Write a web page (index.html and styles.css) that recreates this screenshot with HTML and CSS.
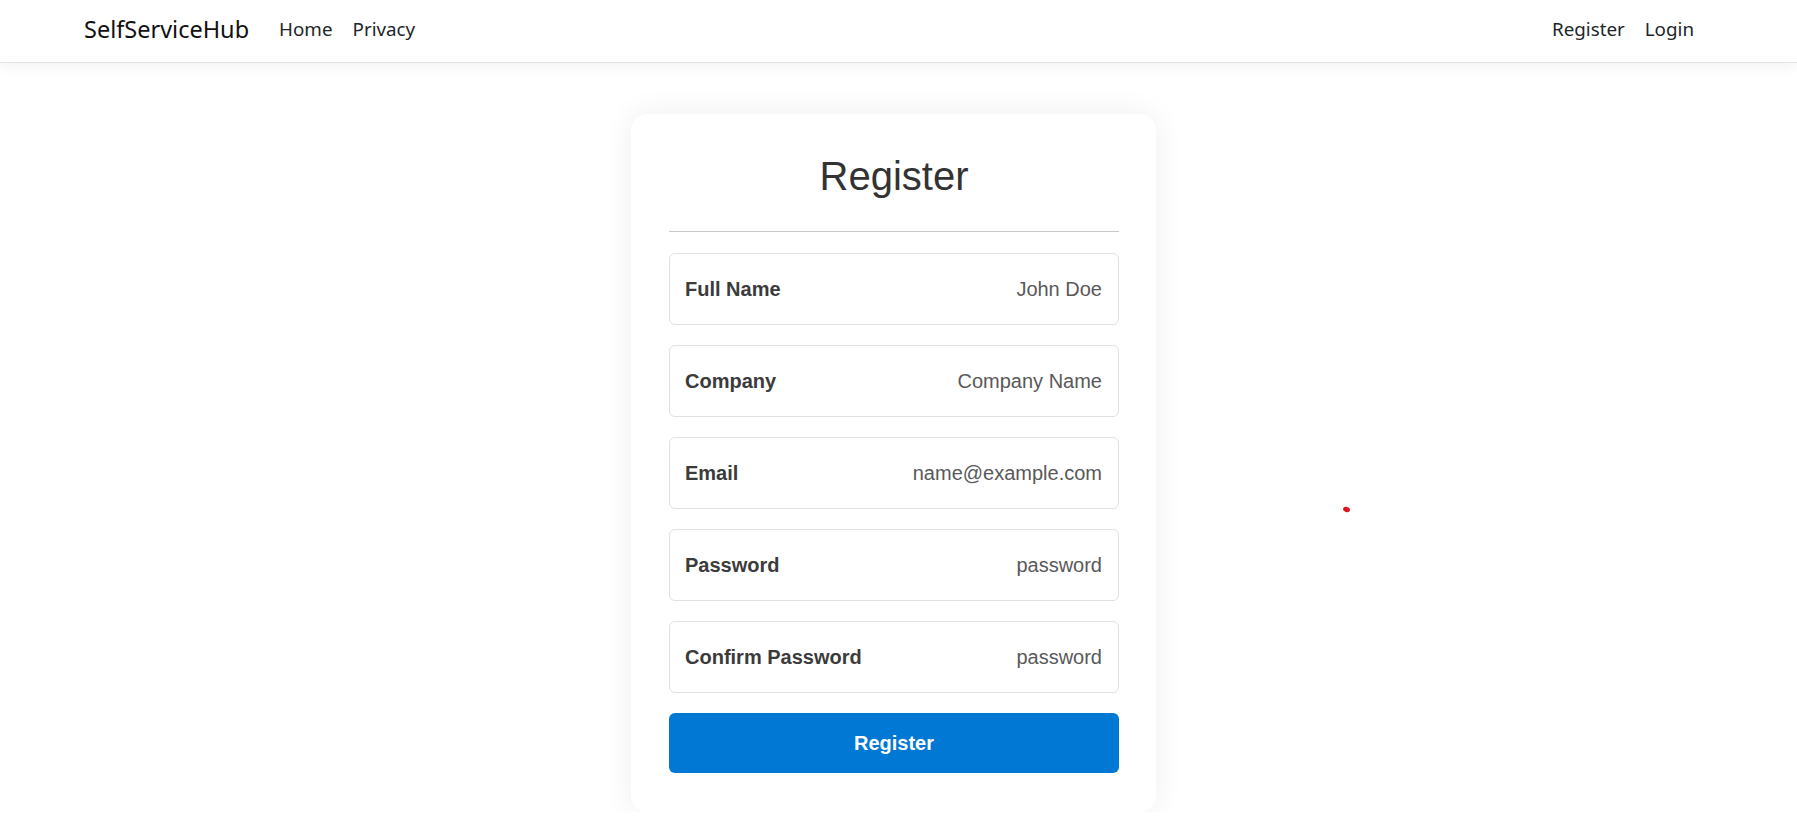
FILE: index.html
```html
<!DOCTYPE html>
<html lang="en">
<head>
  <meta charset="UTF-8">
  <title>Register - SelfServiceHub</title>
  <link rel="stylesheet" href="styles.css">
</head>
<body>

  <header class="navbar">
    <a class="brand" href="#">SelfServiceHub</a>
    <nav class="nav-links">
      <a href="#">Home</a>
      <a href="#">Privacy</a>
    </nav>
    <nav class="nav-links nav-right">
      <a href="#">Register</a>
      <a href="#">Login</a>
    </nav>
  </header>

  <main class="pagina">
    <form class="tarjeta">
      <h1>Register</h1>
      <hr>

      <div class="campo">
        <label for="nombre">Full Name</label>
        <input type="text" id="nombre" placeholder="John Doe">
      </div>
      <div class="campo">
        <label for="empresa">Company</label>
        <input type="text" id="empresa" placeholder="Company Name">
      </div>
      <div class="campo">
        <label for="correo">Email</label>
        <input type="email" id="correo" placeholder="name@example.com">
      </div>
      <div class="campo">
        <label for="clave">Password</label>
        <input type="password" id="clave" placeholder="password">
      </div>
      <div class="campo">
        <label for="clave2">Confirm Password</label>
        <input type="password" id="clave2" placeholder="password">
      </div>

      <button type="button">Register</button>
    </form>
  </main>

  <span class="punto"></span>

</body>
</html>
```

FILE: styles.css
```css
body {
  margin: 0;
  background-color: #fff;
  font-family: "Liberation Sans", Arial, sans-serif;
  color: #333;
}

.navbar {
  display: flex;
  align-items: center;
  height: 62px;
  padding: 0 93px 0 84px;
  border-bottom: 1px solid #e3e3e3;
  box-shadow: 0 4px 12px rgba(0, 0, 0, 0.05);
  font-family: "Noto Sans", "Open Sans", sans-serif;
}

.brand {
  color: #111;
  font-size: 23.5px;
  text-decoration: none;
  margin-right: 20px;
  padding-bottom: 4px;
}

.nav-links {
  display: flex;
  padding-bottom: 4px;
}

.nav-links a {
  color: #212529;
  font-size: 18.8px;
  text-decoration: none;
  padding: 0 10px;
}

.nav-right {
  margin-left: auto;
}

.pagina {
  padding: 51px 10px 0 0;
}

.tarjeta {
  width: 525px;
  box-sizing: border-box;
  margin: 0 auto;
  padding: 38px 37px 39px 38px;
  background-color: #fff;
  border-radius: 16px;
  box-shadow: 0 0 30px rgba(0, 0, 0, 0.07);
}

h1 {
  margin: 0;
  font-size: 40px;
  line-height: 48px;
  font-weight: normal;
  text-align: center;
  color: #333;
}

hr {
  margin: 31px 0 21px;
  border: none;
  border-top: 1px solid #c8c8c8;
}

.campo {
  display: flex;
  align-items: center;
  height: 72px;
  box-sizing: border-box;
  padding: 0 16px 0 15px;
  margin-bottom: 20px;
  border: 1px solid #dee2e6;
  border-radius: 6px;
}

.campo label {
  font-size: 20px;
  font-weight: bold;
  color: #3b3b3b;
  white-space: nowrap;
}

.campo input {
  flex: 1;
  min-width: 0;
  border: none;
  outline: none;
  background: transparent;
  text-align: right;
  font-family: "Liberation Sans", Arial, sans-serif;
  font-size: 20px;
  color: #555;
  padding: 0;
}

.campo input::placeholder {
  color: #595959;
}

button {
  display: block;
  width: 100%;
  height: 60px;
  border: none;
  border-radius: 6px;
  background-color: #0078d4;
  color: #fff;
  font-family: "Liberation Sans", Arial, sans-serif;
  font-size: 20px;
  font-weight: bold;
  cursor: pointer;
}

.punto {
  position: absolute;
  left: 1343px;
  top: 507px;
  width: 7px;
  height: 5px;
  border-radius: 50%;
  background-color: #e3121b;
  transform: rotate(15deg);
}
```
